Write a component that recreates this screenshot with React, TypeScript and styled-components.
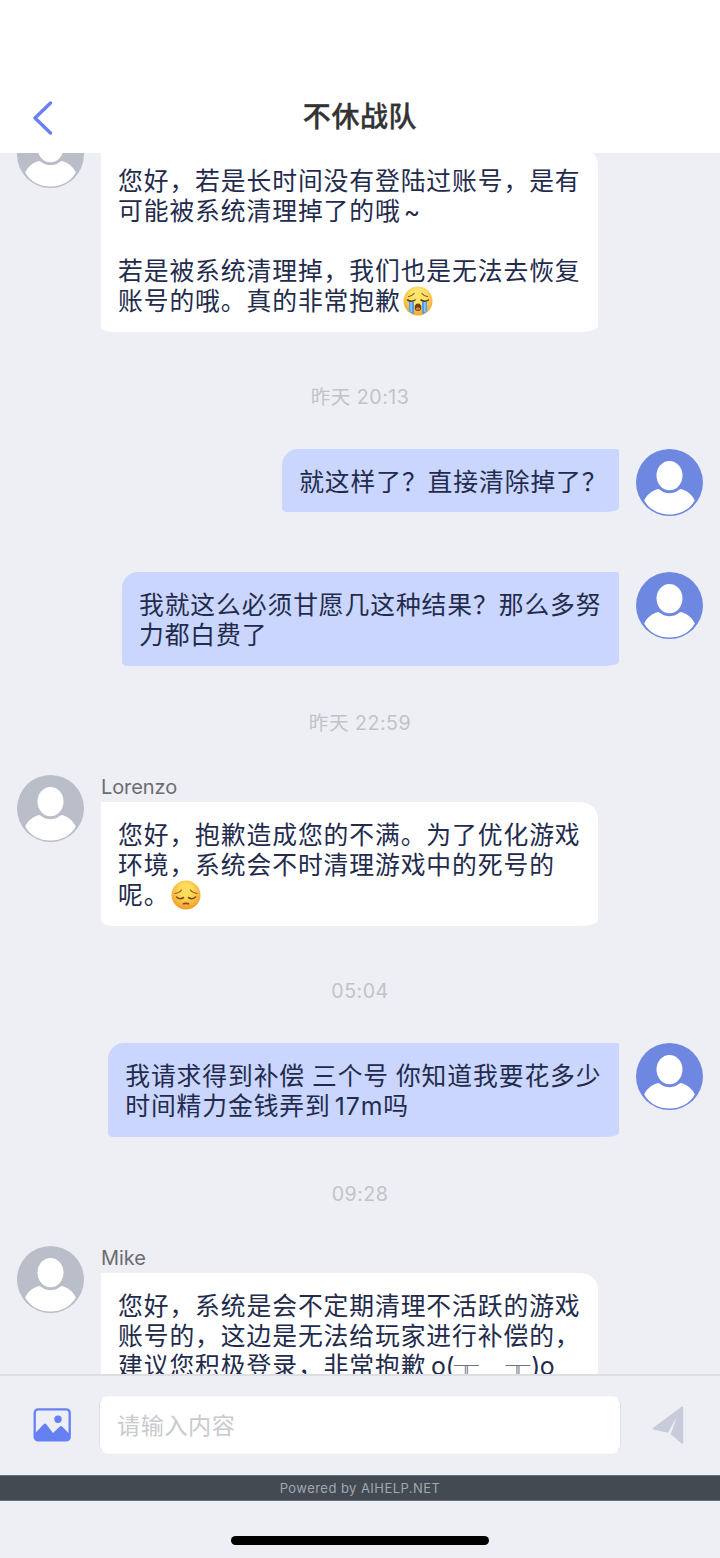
import React from "react";
import styled, { createGlobalStyle } from "styled-components";

const GlobalStyle = createGlobalStyle`
  * { box-sizing: border-box; }
  body {
    margin: 0;
    background: #edeff5;
    font-family: Inter, "Noto Sans CJK SC", sans-serif;
  }
`;

const Screen = styled.div`
  display: flex;
  flex-direction: column;
  width: 720px;
  height: 1558px;
  background: #edeff5;
  overflow: hidden;
`;

const Header = styled.header`
  display: grid;
  grid-template-columns: 86px 1fr 86px;
  align-items: center;
  flex: none;
  height: 153px;
  padding-top: 80px;
  background: #ffffff;
`;

const BackButton = styled.button`
  display: flex;
  justify-content: center;
  padding: 2px 0 0;
  border: 0;
  background: none;
`;

const Title = styled.h1`
  margin: 0;
  font-size: 28px;
  font-weight: 500;
  line-height: 40px;
  letter-spacing: 0.6px;
  text-align: center;
  color: #333333;
  -webkit-text-stroke: 0.35px #333333;
`;

const Conversation = styled.main`
  flex: none;
  height: 1221px;
  overflow: hidden;
`;

const Thread = styled.div`
  display: flex;
  flex-direction: column;
  margin-top: -32px;
`;

const Row = styled.div<{ $mine?: boolean; $height: number; $after: number }>`
  display: flex;
  flex-direction: ${(p) => (p.$mine ? "row-reverse" : "row")};
  align-items: flex-start;
  gap: 17px;
  flex: none;
  height: ${(p) => p.$height}px;
  margin-bottom: ${(p) => p.$after}px;
  padding: 0 17px;
`;

const Column = styled.div`
  display: flex;
  flex-direction: column;
`;

const Name = styled.div`
  height: 27px;
  font-size: 20px;
  line-height: 24px;
  letter-spacing: -0.1px;
  color: #6c6c6e;
`;

const Bubble = styled.div<{ $mine?: boolean }>`
  padding: 17.7px 17.5px 15.5px 17px;
  border-radius: ${(p) =>
    p.$mine ? "16px 2px 16px 5px / 16px 2px 4px 4px" : "0 18px 18px 12px / 0 16px 6px 6px"};
  background: ${(p) => (p.$mine ? "#cad6fd" : "#ffffff")};
  font-size: 24.8px;
  line-height: 30.2px;
  letter-spacing: 0.9px;
  white-space: pre;
  color: #232b4d;
`;

const Line = styled.div`
  height: 30.2px;
`;

const Face = styled.svg`
  display: inline-block;
  width: 30px;
  height: 30px;
  margin: 0 1px 0 2px;
  vertical-align: top;
`;

const Latin = styled.span<{ $gap?: number; $tracking?: number }>`
  margin-left: ${(p) => p.$gap ?? 0}px;
  letter-spacing: ${(p) => p.$tracking ?? 0.9}px;
`;

const Thin = styled.span`
  font-family: "Noto Sans CJK SC", sans-serif;
  font-weight: 100;
  line-height: 0;
  letter-spacing: 0.9px;
  color: #6d728a;
`;

const EndMark = styled.span`
  margin-right: -6px;
`;

const Time = styled.div`
  flex: none;
  height: 24px;
  margin-bottom: 40px;
  font-size: 19.6px;
  line-height: 24px;
  letter-spacing: 0.5px;
  text-align: center;
  color: #c1c3c8;
`;

const AvatarSvg = styled.svg`
  display: block;
  flex: none;
  width: 67px;
  height: 67px;
`;

const Composer = styled.form`
  display: flex;
  align-items: center;
  flex: none;
  height: 101px;
  padding: 0 33px 2px 33px;
  border-top: 2px solid #dcdee4;
`;

const Field = styled.input`
  width: 522px;
  height: 58px;
  margin: 0 31px 0 28px;
  padding: 2px 17px 0;
  border: 1px solid #dfe2ea;
  border-top-color: #fafbfd;
  border-bottom-color: #fafbfd;
  border-radius: 9px;
  background: #ffffff;
  font: 23.2px Inter, "Noto Sans CJK SC", sans-serif;
  letter-spacing: 0.5px;
  &::placeholder { color: #c8cace; opacity: 1; }
`;

const IconButton = styled.button<{ $drop?: number }>`
  display: flex;
  flex: none;
  padding: ${(p) => p.$drop ?? 0}px 0 0;
  border: 0;
  background: none;
`;

const Credit = styled.div`
  flex: none;
  height: 26px;
  border: 1px solid #6b7079;
  border-width: 1px 0;
  background: #444a54;
  font-size: 13px;
  line-height: 25px;
  letter-spacing: 0.45px;
  text-align: center;
  color: #a3a7ae;
`;

const HomeArea = styled.footer`
  display: flex;
  justify-content: center;
  flex: 1;
  padding-top: 35px;
`;

const HomeBar = styled.div`
  width: 258px;
  height: 9px;
  border-radius: 5px;
  background: #000000;
`;

function Avatar({ mine }: { mine?: boolean }) {
  return (
    <AvatarSvg viewBox="0 0 67 67">
      <circle cx="33.5" cy="33.5" r="33.5" fill={mine ? "#6e87e0" : "#b9bec8"} />
      <ellipse cx="33.5" cy="26.6" rx="13" ry="14.7" fill="#fff" />
      <path
        d="M22.5 40C26 42.2 28.4 44.2 33.5 44.2S41 42.2 44.5 40C50.5 41.2 56 45.4 58.8 51.4C53.9 60.4 44 65.5 33.5 65.5S13.1 60.4 8.2 51.4C11 45.4 16.5 41.2 22.5 40Z"
        fill="#fff"
      />
    </AvatarSvg>
  );
}

function CryingFace() {
  return (
    <Face viewBox="0 0 30 30">
      <defs>
        <radialGradient id="cry" cx="50%" cy="35%" r="65%">
          <stop offset="0.4" stopColor="#ffe36b" />
          <stop offset="1" stopColor="#efa52e" />
        </radialGradient>
      </defs>
      <circle cx="15" cy="15" r="14.5" fill="url(#cry)" />
      <path d="M6 15.5h5v12.6q-3-1-5-3.2zM19 15.5h5v9.4q-2 2.2-5 3.2z" fill="#4e9fea" />
      <path d="M7.3 16h1.7v10h-1.7zM21 16h1.7v10H21z" fill="#82c5fa" />
      <path d="M4.5 14q4 2.5 7.5 0M18 14q4 2.5 7.5 0" fill="none" stroke="#5d3a12" strokeWidth="1.5" strokeLinecap="round" />
      <path d="M5.5 10.5q3.5-.3 5.5-3M24.5 10.5q-3.5-.3-5.5-3" fill="none" stroke="#80521a" strokeWidth="1.2" strokeLinecap="round" />
      <path d="M11.7 22q0-4.5 3.3-4.5t3.3 4.5q0 3-3.3 3t-3.3-3z" fill="#71400f" />
      <path d="M13 22q2-1.5 4 0v1.5q-2 1-4 0z" fill="#df7950" />
    </Face>
  );
}

function PensiveFace() {
  return (
    <Face viewBox="0 0 30 30">
      <defs>
        <radialGradient id="pensive" cx="50%" cy="35%" r="65%">
          <stop offset="0.35" stopColor="#ffdc5c" />
          <stop offset="1" stopColor="#ef9b28" />
        </radialGradient>
      </defs>
      <circle cx="15" cy="15" r="14.5" fill="url(#pensive)" />
      <path d="M5.5 17q3.5 3.2 7 .5M24.5 17q-3.5 3.2-7 .5" fill="none" stroke="#76470f" strokeWidth="1.6" strokeLinecap="round" />
      <path d="M4 13.5q4.500-.5 6.500-3.500M26 13.500q-4.500-.5-6.500-3.500" fill="none" stroke="#94601c" strokeWidth="1.2" strokeLinecap="round" />
      <path d="M12.5 23.8q2.5-1 5 0" fill="none" stroke="#8a4a15" strokeWidth="1.7" strokeLinecap="round" />
    </Face>
  );
}

interface MessageProps {
  mine?: boolean;
  name?: string;
  height: number;
  after: number;
  lines: React.ReactNode[];
}

function Message({ mine, name, height, after, lines }: MessageProps) {
  return (
    <Row $mine={mine} $height={height} $after={after}>
      <Avatar mine={mine} />
      <Column>
        {!mine && <Name>{name}</Name>}
        <Bubble $mine={mine}>
          {lines.map((line, i) => (
            <Line key={i}>{line}</Line>
          ))}
        </Bubble>
      </Column>
    </Row>
  );
}

export default function App() {
  return (
    <Screen lang="zh-CN">
      <GlobalStyle />
      <Header>
        <BackButton aria-label="返回">
          <svg width="22" height="34" viewBox="0 0 22 34" fill="none" stroke="#6880f2" strokeWidth="3.4" strokeLinecap="round" strokeLinejoin="round">
            <path d="M18.5 2L3 17L18.5 32" />
          </svg>
        </BackButton>
        <Title>不休战队</Title>
      </Header>
      <Conversation>
        <Thread>
          <Message
            height={211}
            after={53}
            lines={[
              "您好，若是长时间没有登陆过账号，是有",
              <>可能被系统清理掉了的哦<Latin $gap={3}>~</Latin></>,
              "",
              "若是被系统清理掉，我们也是无法去恢复",
              <>账号的哦。真的非常抱歉<CryingFace /></>,
            ]}
          />
          <Time>昨天 20:13</Time>
          <Message mine height={67} after={56} lines={[<>就这样了？直接清除掉了<EndMark>？</EndMark></>]} />
          <Message mine height={93} after={46} lines={["我就这么必须甘愿几这种结果？那么多努", "力都白费了"]} />
          <Time>昨天 22:59</Time>
          <Message
            name="Lorenzo"
            height={151}
            after={53}
            lines={[
              "您好，抱歉造成您的不满。为了优化游戏",
              "环境，系统会不时清理游戏中的死号的",
              <>呢。<PensiveFace /></>,
            ]}
          />
          <Time>05:04</Time>
          <Message
            mine
            height={93}
            after={46}
            lines={[
              <>我请求得到补偿<Latin $tracking={-0.1}> </Latin>三个号<Latin $tracking={-0.1}> </Latin>你知道我要花多少</>,
              <>时间精力金钱弄到<Latin $gap={4}>17m</Latin>吗</>,
            ]}
          />
          <Time>09:28</Time>
          <Message
            name="Mike"
            height={151}
            after={0}
            lines={[
              "您好，系统是会不定期清理不活跃的游戏",
              "账号的，这边是无法给玩家进行补偿的，",
              <>建议您积极登录，非常抱歉<Latin $gap={-2} $tracking={-0.4}> o(</Latin><Thin>╥﹏╥</Thin><Latin $tracking={-0.4}>)o</Latin></>,
            ]}
          />
        </Thread>
      </Conversation>
      <Composer>
        <IconButton type="button" aria-label="图片">
          <svg width="38" height="34" viewBox="0 0 38 34">
            <rect x="1.7" y="1.4" width="35" height="31" rx="3.5" fill="none" stroke="#6580f3" strokeWidth="2.3" />
            <circle cx="25" cy="11.2" r="3.7" fill="#6580f3" />
            <path d="M1.7 25.5L10.7 16.2Q12 15 13.3 16.2L20 25L26.6 18.7Q28 17.5 29.4 18.7L36.5 26V29Q36.5 32.5 33 32.5H5Q1.7 32.5 1.7 29Z" fill="#6580f3" />
          </svg>
        </IconButton>
        <Field placeholder="请输入内容" />
        <IconButton type="button" aria-label="发送" $drop={2}>
          <svg width="32" height="39" viewBox="0 0 32 39" fill="#c8cbd9">
            <path d="M29.2 1Q31.2 -0.2 31.2 2.3V36.500Q31 38.600 29.200 37.200L18.800 28.200L24.600 11.200L16 26.800L1.500 23.600Q0 22.800 1.500 21.600Z" />
          </svg>
        </IconButton>
      </Composer>
      <Credit>Powered by AIHELP.NET</Credit>
      <HomeArea>
        <HomeBar />
      </HomeArea>
    </Screen>
  );
}
